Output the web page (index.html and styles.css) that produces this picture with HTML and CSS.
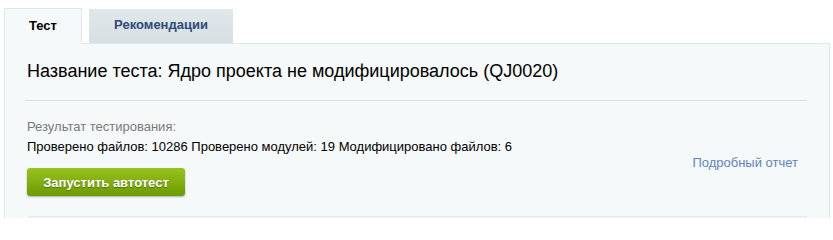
FILE: index.html
```html
<!DOCTYPE html>
<html lang="ru">
<head>
<meta charset="utf-8">
<link rel="stylesheet" href="styles.css">
</head>
<body>
<div class="page">
  <div class="tabs">
    <div class="tab tab-active">Тест</div>
    <div class="tab tab-inactive">Рекомендации</div>
  </div>
  <div class="panel">
    <div class="title">Название теста: Ядро проекта не модифицировалось (QJ0020)</div>
    <div class="result">
      <div class="result-main">
        <div class="label">Результат тестирования:</div>
        <div class="stats">Проверено файлов: 10286 Проверено модулей: 19 Модифицировано файлов: 6</div>
        <button class="btn">Запустить автотест</button>
      </div>
      <a class="report" href="#">Подробный отчет</a>
    </div>
    <div class="bottom-line"></div>
  </div>
</div>
</body>
</html>
```

FILE: styles.css
```css
html, body {
  margin: 0;
  padding: 0;
  background: #ffffff;
  overflow: hidden;
}
body {
  font-family: "Liberation Sans", Arial, sans-serif;
}
.page {
  padding: 8px 4px 0 4px;
}
.tabs {
  display: flex;
  align-items: flex-start;
  gap: 7px;
  position: relative;
  z-index: 1;
  margin-bottom: -1px;
}
.tab {
  box-sizing: border-box;
  font-size: 13px;
  font-weight: bold;
  text-align: center;
}
.tab-active {
  width: 78px;
  height: 36px;
  line-height: 34px;
  background: #f5f9f9;
  border: 1px solid #dfe7ea;
  border-bottom: none;
  color: #000;
}
.tab-inactive {
  margin-top: 1px;
  width: 144px;
  height: 34px;
  line-height: 32px;
  background: linear-gradient(#e1e8ea, #d6dfe2);
  border-bottom: 1px solid #d6dfe2;
  color: #2d4a78;
}
.panel {
  box-sizing: border-box;
  width: 826px;
  height: 175px;
  background: #f5f9f9;
  border: 1px solid #dfe7ea;
  border-bottom: none;
  padding: 0 22px 0 20px;
}
.title {
  font-size: 18px;
  color: #000;
  padding: 16px 0 18px 2px;
  line-height: 22px;
  border-bottom: 1px solid #d9e0e3;
}
.result {
  display: flex;
  justify-content: space-between;
  align-items: flex-start;
  padding: 18px 9px 0 2px;
}
.label {
  font-size: 13px;
  color: #7a7a7a;
  line-height: 16px;
}
.stats {
  font-size: 13px;
  color: #000;
  line-height: 16px;
  margin-top: 4px;
}
.btn {
  display: block;
  margin-top: 13px;
  width: 158px;
  height: 28px;
  border: none;
  border-radius: 3px;
  background: linear-gradient(#99c21f, #6d9a02);
  box-shadow: 0 1px 2px rgba(0, 0, 0, 0.3);
  color: #fff;
  font-family: "Liberation Sans", Arial, sans-serif;
  font-weight: bold;
  font-size: 13px;
  text-shadow: 0 1px 1px rgba(0, 0, 0, 0.35);
  padding: 0;
}
.report {
  margin-top: 36px;
  font-size: 13px;
  line-height: 16px;
  color: #6282bd;
  text-decoration: none;
}
.bottom-line {
  margin: 20px 0 0 3px;
  height: 2px;
  background: linear-gradient(#e3e8ea, #eef2f3);
}
```
